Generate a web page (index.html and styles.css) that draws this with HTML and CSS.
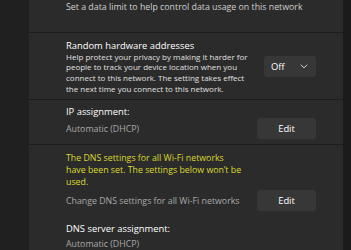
FILE: index.html
```html
<!DOCTYPE html>
<html>
<head>
<meta charset="utf-8">
<link rel="stylesheet" href="styles.css">
</head>
<body>
<div class="page">
  <div class="gutter"></div>
  <div class="card">
    <div class="row row-limit">
      <div class="muted">Set a data limit to help control data usage on this network</div>
    </div>
    <div class="row row-random">
      <div class="text">
        <div class="title">Random hardware addresses</div>
        <div class="desc">Help protect your privacy by making it harder for<br>people to track your device location when you<br>connect to this network. The setting takes effect<br>the next time you connect to this network.</div>
      </div>
      <div class="dropdown"><span>Off</span>
        <svg class="chev" width="8" height="5" viewBox="0 0 8 5"><path d="M0.8 0.8 L4 3.8 L7.2 0.8" fill="none" stroke="#cfcfcf" stroke-width="1"/></svg>
      </div>
    </div>
    <div class="row row-ip">
      <div class="text">
        <div class="title">IP assignment:</div>
        <div class="value">Automatic (DHCP)</div>
      </div>
      <div class="btn">Edit</div>
    </div>
    <div class="row row-dns">
      <div class="text">
        <div class="warn">The DNS settings for all Wi-Fi networks<br>have been set. The settings below won’t be<br>used.</div>
        <div class="dns-line">
          <div class="muted">Change DNS settings for all Wi-Fi networks</div>
          <div class="btn">Edit</div>
        </div>
        <div class="title dns-title">DNS server assignment:</div>
        <div class="value">Automatic (DHCP)</div>
      </div>
    </div>
  </div>
  <div class="rail"></div>
</div>
</body>
</html>
```

FILE: styles.css
```css
html, body {
  margin: 0;
  padding: 0;
  background: #202020;
  width: 351px;
  height: 250px;
  overflow: hidden;
  font-family: "Open Sans", "Noto Sans", sans-serif;
  color: #ffffff;
}
.page {
  display: flex;
  height: 250px;
}
.gutter {
  width: 29px;
  background: #202020;
  flex: none;
}
.card {
  width: 314px;
  flex: none;
  background: #2b2b2b;
  display: flex;
  flex-direction: column;
}
.rail {
  flex: 1;
  background: #1b1b1b;
}
.row {
  display: flex;
  align-items: flex-start;
  justify-content: space-between;
  padding-left: 37px;
  padding-right: 27px;
  border-bottom: 1px solid #1d1d1d;
  box-sizing: border-box;
  white-space: nowrap;
}
.row-limit {
  height: 33px;
  padding-top: 1px;
}
.muted {
  font-size: 8.8px;
  line-height: 12px;
  color: #cfcfcf;
}
.title {
  font-size: 9.4px;
  line-height: 12px;
  color: #ffffff;
}
.desc {
  font-size: 8px;
  line-height: 10.6px;
  color: #e0e0e0;
}
.row-random {
  height: 68px;
  padding-top: 7px;
}
.dropdown {
  margin-top: 16px;
  width: 52px;
  height: 21px;
  background: #373737;
  border-radius: 3px;
  display: flex;
  align-items: center;
  justify-content: space-between;
  padding: 0 8px 0 7px;
  box-sizing: border-box;
  font-size: 9.4px;
  flex: none;
}
.chev { display: block; }
.row-ip {
  height: 45px;
  padding-top: 6px;
}
.value {
  font-size: 8.8px;
  line-height: 12px;
  color: #a8a8a8;
  margin-top: 5px;
}
.btn {
  width: 59px;
  height: 21px;
  background: #373737;
  border-radius: 3px;
  display: flex;
  align-items: center;
  justify-content: center;
  font-size: 9.4px;
  color: #ffffff;
  flex: none;
}
.row-ip .btn { margin-top: 12px; }
.row-dns {
  border-bottom: none;
  padding-top: 7px;
  flex: 1;
}
.row-dns .text { width: 250px; }
.warn {
  font-size: 8.8px;
  line-height: 12px;
  color: #dada2e;
}
.dns-line {
  display: flex;
  justify-content: space-between;
  align-items: center;
  margin-top: 2px;
}
.dns-line .muted { color: #a8a8a8; }
.dns-title { margin-top: 12px; }
.row-dns .value { margin-top: 3px; }
```
